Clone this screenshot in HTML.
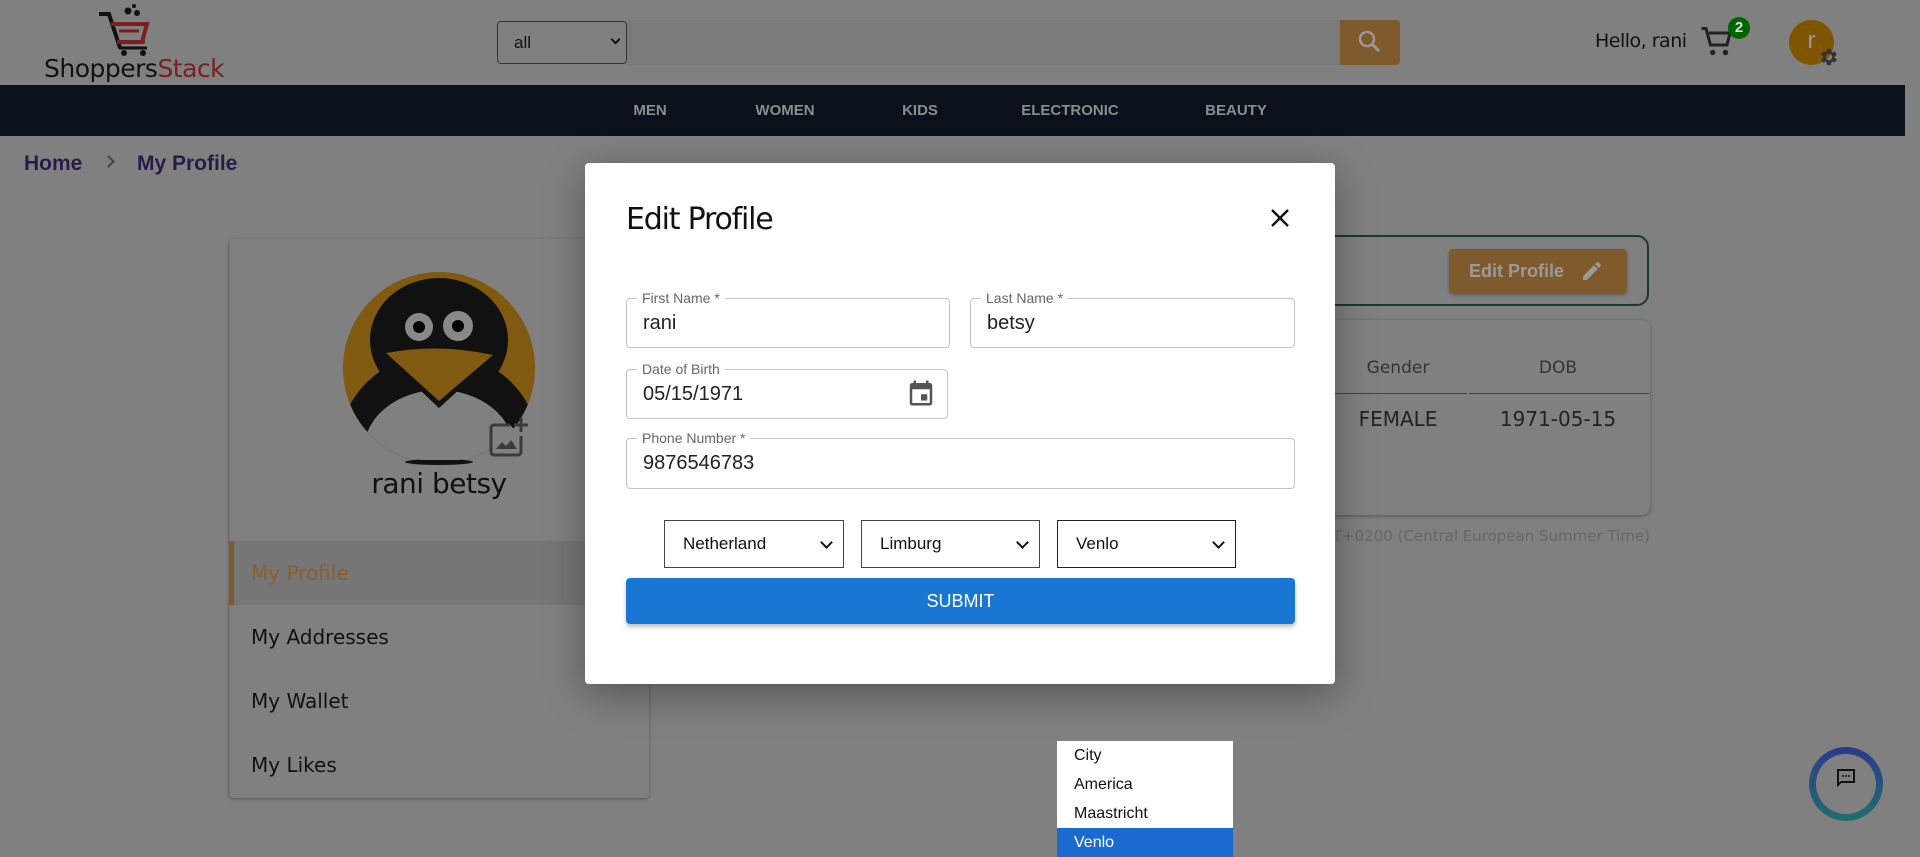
<!DOCTYPE html>
<html><head><meta charset="utf-8">
<style>
*{box-sizing:border-box;margin:0;padding:0}
body{width:1920px;height:847px;overflow:hidden;background:#808080;font-family:"Liberation Sans",sans-serif;position:relative}
.a{position:absolute}
.nav span{position:absolute;top:0;line-height:51px;color:#8c8c8c;font-weight:bold;font-size:15px;transform:translateX(-50%)}
.menu div{position:absolute;left:0;width:420px;height:64px;line-height:64px;padding-left:22px;font-size:20px;color:#111;font-family:"DejaVu Sans",sans-serif}
.fld{position:absolute;border:1px solid #c4c4c4;border-radius:4px;background:#fff}
.fld .lb{position:absolute;top:-9px;left:10px;background:#fff;padding:0 5px;font-size:14px;color:#666;line-height:16px}
.fld .v{position:absolute;left:16px;top:0;line-height:48px;font-size:20px;color:#222}
.sel{position:absolute;border:1px solid #444;background:#fff;font-size:17px;color:#111;line-height:46px;padding-left:18px}
.sel:after{content:"";position:absolute;right:12px;top:17px;width:7px;height:7px;border-right:2px solid #111;border-bottom:2px solid #111;transform:rotate(45deg)}
</style></head><body>

<svg class="a" style="left:95px;top:4px" width="62" height="52" viewBox="0 0 62 52">
<path d="M4 10 L14 10 L25 44" stroke="#111" stroke-width="4" fill="none"/>
<path d="M16 20 L52 20 L47 38 L22 38" stroke="#7a1e1e" stroke-width="4" fill="none"/>
<path d="M24 27 L44 27 M22 38 L50 38" stroke="#7a1e1e" stroke-width="3"/>
<line x1="24" y1="44" x2="52" y2="44" stroke="#111" stroke-width="3"/>
<circle cx="29" cy="49" r="3" fill="#111"/><circle cx="48" cy="49" r="3" fill="#111"/>
<circle cx="33" cy="7" r="3.5" fill="#111"/><circle cx="42" cy="9" r="3" fill="#111"/><circle cx="39" cy="2" r="2" fill="#111"/>
</svg>
<div class="a" style="left:44px;top:54px;font-size:25px;font-family:'DejaVu Sans',sans-serif;letter-spacing:-0.5px;color:#111">Shoppers<span style="color:#7a1e1e">Stack</span></div>

<div class="a" style="left:497px;top:21px;width:130px;height:43px;border:1px solid #333;border-radius:4px;font-size:17px;line-height:41px;padding-left:16px;color:#111">all</div>
<div class="a" style="left:612px;top:36px;width:7px;height:7px;border-right:2px solid #111;border-bottom:2px solid #111;transform:rotate(45deg)"></div>
<div class="a" style="left:627px;top:20px;width:714px;height:45px;background:#7a7a7a"></div>
<div class="a" style="left:1340px;top:20px;width:60px;height:45px;background:#7f5a2c;border-radius:0 4px 4px 0"></div>
<svg class="a" style="left:1357px;top:29px" width="26" height="26" viewBox="0 0 26 26"><circle cx="10" cy="10" r="7" stroke="#999" stroke-width="2.5" fill="none"/><line x1="15" y1="15" x2="22" y2="22" stroke="#999" stroke-width="2.8"/></svg>

<div class="a" style="left:1595px;top:30px;font-size:19px;color:#111;font-family:'DejaVu Sans',sans-serif;letter-spacing:-0.5px">Hello, rani</div>
<svg class="a" style="left:1700px;top:24px" width="36" height="36" viewBox="0 0 24 24"><path d="M1 3h3l3 11h11l2-8H6" stroke="#222" stroke-width="2" fill="none"/><circle cx="8.5" cy="19" r="1.8" fill="#222"/><circle cx="17" cy="19" r="1.8" fill="#222"/></svg>
<div class="a" style="left:1728px;top:17px;width:22px;height:22px;border-radius:50%;background:#006400;color:#ddd;font-size:15px;font-weight:bold;text-align:center;line-height:22px">2</div>
<div class="a" style="left:1789px;top:20px;width:45px;height:45px;border-radius:50%;background:#7f5600;color:#999;font-size:24px;text-align:center;line-height:42px">r</div>
<svg class="a" style="left:1817px;top:46px" width="22" height="22" viewBox="0 0 24 24"><path fill="#333" d="M19.4 13a7.5 7.5 0 000-2l2.1-1.6-2-3.5-2.5 1a7 7 0 00-1.7-1L15 3h-4l-.4 2.9a7 7 0 00-1.700 1l-2.5-1-2 3.5L6.6 11a7.5 7.5 0 000 2l-2.1 1.6 2 3.5 2.5-1a7 7 0 001.7 1L11 21h4l.4-2.9a7 7 0 001.7-1l2.5 1 2-3.5zM13 15.5a3.5 3.5 0 110-7 3.5 3.5 0 010 7z"/></svg>

<div class="a nav" style="left:0;top:85px;width:1905px;height:51px;background:#0b111a">
<span style="left:650px">MEN</span><span style="left:785px">WOMEN</span><span style="left:920px">KIDS</span><span style="left:1070px">ELECTRONIC</span><span style="left:1236px">BEAUTY</span>
</div>

<div class="a" style="left:24px;top:152px;font-size:21px;font-weight:bold;color:#2a1a47">Home</div>
<div class="a" style="left:104px;top:157px;width:9px;height:9px;border-right:2px solid #444;border-top:2px solid #444;transform:rotate(45deg)"></div>
<div class="a" style="left:137px;top:152px;font-size:21px;font-weight:bold;color:#2a1a47">My Profile</div>

<div class="a" style="left:229px;top:239px;width:420px;height:559px;border-left:1px solid #747474;box-shadow:0 1px 3px rgba(0,0,0,.35);border-radius:4px"></div>
<svg class="a" style="left:229px;top:239px" width="420" height="260" viewBox="229 239 420 260">
<defs><clipPath id="c"><circle cx="439" cy="368" r="96"/></clipPath></defs>
<circle cx="439" cy="368" r="96" fill="#7f5a10"/>
<g clip-path="url(#c)">
<ellipse cx="439" cy="448" rx="100" ry="95" fill="#111"/>
<ellipse cx="439" cy="340" rx="69" ry="62" fill="#111"/>
<ellipse cx="439" cy="450" rx="75" ry="60" fill="#808080"/>
</g>
<ellipse cx="439" cy="462" rx="34" ry="3" fill="#111"/>
<rect x="420" y="452" width="40" height="8" fill="#808080"/>
<circle cx="419" cy="327" r="14" fill="#888"/><circle cx="419" cy="327" r="6" fill="#000"/>
<circle cx="458" cy="326" r="15" fill="#888"/><circle cx="458" cy="326" r="6" fill="#000"/>
<path d="M381 353 Q439 340 497 355 L439 408 Z" fill="#111"/>
<path d="M386 353 Q439 343 493 355 L439 401 Z" fill="#7f5a10"/>
<path d="M510 425 H494 a3 3 0 0 0-3 3 v24 a3 3 0 0 0 3 3 h24 a3 3 0 0 0 3-3 V436" stroke="#3a3a3a" stroke-width="3" fill="#808080"/>
<path d="M496 449 l6-7 4 4 5-6 6 9z" fill="#3a3a3a"/>
<path d="M521 418 v14 M514 425 h14" stroke="#3a3a3a" stroke-width="3"/>
</svg>
<div class="a" style="left:229px;top:467px;width:420px;text-align:center;font-size:28px;color:#111;font-family:'DejaVu Sans',sans-serif;letter-spacing:-0.5px">rani betsy</div>
<div class="a menu" style="left:229px;top:541px">
<div style="top:0;background:#767676;border-left:5px solid #7f5a2c;padding-left:17px;color:#8a5e2a">My Profile</div>
<div style="top:64px">My Addresses</div>
<div style="top:128px">My Wallet</div>
<div style="top:192px">My Likes</div>
</div>

<div class="a" style="left:1250px;top:235px;width:399px;height:71px;border:2px solid #1a3a2a;border-radius:12px"></div>
<div class="a" style="left:1449px;top:249px;width:178px;height:44px;background:#7f5a2c;border-radius:4px;box-shadow:0 2px 3px rgba(0,0,0,.3);color:#9a9a9a;font-weight:bold;font-size:18px;line-height:44px;padding-left:20px">Edit Profile</div>
<svg class="a" style="left:1580px;top:259px" width="24" height="24" viewBox="0 0 24 24"><path fill="#9a9a9a" d="M3 17.25V21h3.75L17.8 9.94l-3.75-3.75zM20.7 7.04a1 1 0 000-1.41l-2.340-2.34a1 1 0 00-1.41 0l-1.83 1.83 3.75 3.75z"/></svg>
<div class="a" style="left:1250px;top:320px;width:400px;height:195px;border-radius:8px;box-shadow:0 1px 4px rgba(0,0,0,.35)"></div>
<div class="a" style="left:1250px;top:393px;width:217px;height:1px;background:#444"></div>
<div class="a" style="left:1469px;top:393px;width:180px;height:1px;background:#444"></div>
<div class="a" style="left:1338px;top:358px;width:120px;text-align:center;font-size:17px;color:#333;font-family:'DejaVu Sans',sans-serif">Gender</div>
<div class="a" style="left:1498px;top:358px;width:120px;text-align:center;font-size:17px;color:#333;font-family:'DejaVu Sans',sans-serif">DOB</div>
<div class="a" style="left:1328px;top:407px;width:140px;text-align:center;font-size:20px;color:#222;font-family:'DejaVu Sans',sans-serif">FEMALE</div>
<div class="a" style="left:1488px;top:407px;width:140px;text-align:center;font-size:20px;color:#222;font-family:'DejaVu Sans',sans-serif">1971-05-15</div>
<div class="a" style="left:1250px;top:527px;width:400px;text-align:right;font-size:15px;color:#666;font-family:'DejaVu Sans',sans-serif;white-space:nowrap">GMT+0200 (Central European Summer Time)</div>

<div class="a" style="left:585px;top:163px;width:750px;height:521px;background:#fff;border-radius:4px;box-shadow:0 10px 40px rgba(0,0,0,.35)"></div>
<div class="a" style="left:626px;top:202px;font-size:30px;color:#111;font-family:'DejaVu Sans',sans-serif;letter-spacing:-1.2px">Edit Profile</div>
<svg class="a" style="left:1269px;top:207px" width="22" height="22" viewBox="0 0 22 22"><path d="M3 3L19 19M19 3L3 19" stroke="#111" stroke-width="2.4"/></svg>

<div class="fld" style="left:626px;top:298px;width:324px;height:50px"><span class="lb">First Name *</span><span class="v">rani</span></div>
<div class="fld" style="left:970px;top:298px;width:325px;height:50px"><span class="lb">Last Name *</span><span class="v">betsy</span></div>
<div class="fld" style="left:626px;top:369px;width:322px;height:50px"><span class="lb">Date of Birth</span><span class="v">05/15/1971</span></div>
<svg class="a" style="left:906px;top:378px" width="30" height="30" viewBox="0 0 24 24"><path fill="#555" d="M19 4h-1V2h-2v2H8V2H6v2H5a2 2 0 00-2 2v14a2 2 0 002 2h14a2 2 0 002-2V6a2 2 0 00-2-2zm0 16H5V9h14zm-7-7h5v5h-5z"/></svg>
<div class="fld" style="left:626px;top:438px;width:669px;height:51px"><span class="lb">Phone Number *</span><span class="v">9876546783</span></div>

<div class="sel" style="left:664px;top:520px;width:180px;height:48px">Netherland</div>
<div class="sel" style="left:861px;top:520px;width:179px;height:48px">Limburg</div>
<div class="sel" style="left:1057px;top:520px;width:179px;height:48px;border-color:#222">Venlo</div>

<div class="a" style="left:626px;top:578px;width:669px;height:46px;background:#1976d2;border-radius:4px;box-shadow:0 3px 4px rgba(0,0,0,.25);color:#fff;font-size:18px;text-align:center;line-height:46px">SUBMIT</div>

<div class="a" style="left:1057px;top:741px;width:176px;height:106px;background:#fff;font-size:16px;color:#111">
<div style="height:29px;line-height:29px;padding-left:17px">City</div>
<div style="height:29px;line-height:29px;padding-left:17px">America</div>
<div style="height:29px;line-height:29px;padding-left:17px">Maastricht</div>
<div style="height:29px;line-height:29px;padding-left:17px;background:#1a6ad2;color:#fff">Venlo</div>
</div>

<div class="a" style="left:1809px;top:747px;width:74px;height:74px;border-radius:50%;background:linear-gradient(#2a3a8a,#1f6e6e)"></div>
<div class="a" style="left:1816px;top:754px;width:60px;height:60px;border-radius:50%;background:#808080"></div>
<svg class="a" style="left:1834px;top:766px" width="24" height="24" viewBox="0 0 24 24"><path d="M4 4h16v12H7l-3 3z" stroke="#111" stroke-width="2" fill="none"/><circle cx="9" cy="10" r="1" fill="#111"/><circle cx="12" cy="10" r="1" fill="#111"/><circle cx="15" cy="10" r="1" fill="#111"/></svg>
</body></html>
